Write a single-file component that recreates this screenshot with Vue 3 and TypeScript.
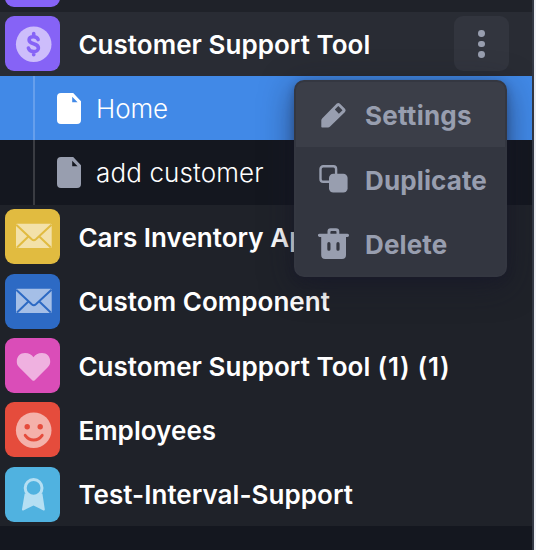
<script setup lang="ts">
type Glyph = 'mail' | 'heart' | 'smile' | 'badge'

interface AppEntry {
  name: string
  suffix?: string
  glyph: Glyph
  tone: string
  size?: string
}

const apps: AppEntry[] = [
  { name: 'Cars Inventory App', glyph: 'mail', tone: 'yellow', size: 'tall' },
  { name: 'Custom Component', glyph: 'mail', tone: 'blue', size: 'raised' },
  { name: 'Customer Support Tool', suffix: ' (1) (1)', glyph: 'heart', tone: 'pink' },
  { name: 'Employees', glyph: 'smile', tone: 'red', size: 'tall' },
  { name: 'Test-Interval-Support', glyph: 'badge', tone: 'sky', size: 'short raised' },
]

const pages = [
  { name: 'Home', selected: true },
  { name: 'add customer', selected: false },
]

const actions = ['Settings', 'Duplicate', 'Delete']
</script>

<template>
  <div class="screen">
    <aside class="sidebar">
      <div class="previous"><span class="tile purple"></span></div>

      <div class="row active">
        <span class="tile purple">
          <svg viewBox="0 0 55 55">
            <circle cx="28.7" cy="28.2" r="17.8" fill="#cdbdfb" />
            <path
              d="M33.1 23.6c-.6-2-2.3-2.9-4.5-2.9-2.7 0-4.5 1.1-4.5 3.2 0 2.4 2.2 3.1 4.5 3.8 2.4.7 4.8 1.6 4.8 4.2 0 2.3-2 3.7-4.8 3.7-2.7 0-4.7-1.2-5.2-3.6M28.7 17.6v3M28.7 36v2.8"
              fill="none" stroke="#8663f6" stroke-width="3.6" stroke-linecap="round" stroke-linejoin="round"
            />
          </svg>
        </span>
        <span class="label">Customer Support Tool</span>
        <button class="more" aria-label="More">
          <i></i><i></i><i></i>
        </button>
        <div class="menu">
          <div v-for="(action, i) in actions" :key="action" class="item" :class="{ hover: i === 0 }">
            <svg v-if="i === 0" viewBox="0 0 32 32">
              <path
                fill-rule="evenodd"
                d="M3.3 27.8V21.4q0-1.2.8-2L18.8 4.6q1.6-1.4 3.2.1l5 5q1.4 1.6 0 3.2L12.1 27.4q-.9.9-2.1 1H4.1q-.8 0-.8-.6ZM20.3 7 16.8 10.6 20.9 14.7 24.5 11.2Z"
              />
            </svg>
            <svg v-else-if="i === 1" viewBox="0 0 32 32">
              <rect x="2.5" y="3.2" width="15.6" height="15.6" rx="2.7" fill="none" stroke="currentColor" stroke-width="2.4" />
              <rect x="11" y="10.8" width="18.6" height="18.8" rx="4.3" />
            </svg>
            <svg v-else viewBox="0 0 32 32">
              <path
                transform="translate(0 .7)"
                fill-rule="evenodd"
                d="M9.5 6.1V3.6q0-3.1 3.1-3.1H18q3.3 0 3.3 3.1v2.5h8.2a1.55 1.55 0 0 1 0 3.1H28v18q0 4-4 4H7.2q-4 0-4-4v-18H1.5a1.55 1.55 0 0 1 0-3.1ZM12.4 6.1h6.1V4.3q0-1-1-1h-4.1q-1 0-1 1ZM9.3 16v5.5a1.6 1.6 0 0 0 3.2 0V16a1.6 1.6 0 0 0-3.2 0ZM18.4 16v5.5a1.6 1.6 0 0 0 3.2 0V16a1.6 1.6 0 0 0-3.2 0Z"
              />
            </svg>
            <span>{{ action }}</span>
          </div>
        </div>
      </div>

      <div class="pages">
        <div v-for="page in pages" :key="page.name" class="page" :class="{ selected: page.selected }">
          <svg viewBox="0 0 24 31">
            <path fill-rule="evenodd" d="M4 0H16.2L24 8.3V27q0 4-4 4H4q-4 0-4-4V4q0-4 4-4ZM15.2 3.7V9.2H20.6Z" />
          </svg>
          <span>{{ page.name }}</span>
        </div>
      </div>

      <div v-for="app in apps" :key="app.name" class="row" :class="app.size">
        <span class="tile" :class="app.tone">
          <svg v-if="app.glyph === 'mail'" viewBox="0 0 55 55">
            <rect class="soft" x="11" y="14.7" width="35.7" height="24.3" rx="1.2" />
            <path
              class="cut"
              d="M11.2 15.8 26.7 30.3Q28.8 32.1 30.9 30.3L46.5 15.8M12 38.5 23.4 27.5M45.8 38.5 34.3 27.5"
              fill="none" stroke-width="2"
            />
          </svg>
          <svg v-else-if="app.glyph === 'heart'" viewBox="0 0 55 55">
            <path
              class="soft"
              d="M27.2 42.2 14.4 29.5C11.9 27 11.8 25.2 11.8 23.2c0-4.7 3.4-8.2 8.2-8.2 4.2 0 6.7 2 8.5 4.2C30.3 17 32.8 15 37 15c4.8 0 8.2 3.5 8.2 8.2 0 2-.2 3.8-2.7 6.3L29.8 42.2q-1.3 1.2-2.6 0Z"
            />
          </svg>
          <svg v-else-if="app.glyph === 'smile'" viewBox="0 0 55 55">
            <circle class="soft" cx="28.7" cy="28.2" r="17.8" />
            <circle cx="22.2" cy="24.7" r="2.7" fill="#e54c3c" />
            <circle cx="35.2" cy="24.7" r="2.7" fill="#e54c3c" />
            <path
              d="M20.2 33.3C24.6 39.5 32.8 39.5 37.2 33.3"
              fill="none" stroke="#e54c3c" stroke-width="2.9" stroke-linecap="round"
            />
          </svg>
          <svg v-else viewBox="0 0 55 55">
            <path
              class="soft"
              d="M19.7 26.5 17 42.2Q16.8 43.8 18.3 43.4L28.5 38.6 38.5 43.4Q40 43.8 39.8 42.2L37.4 26.5Z"
            />
            <circle cx="28.6" cy="20.9" r="8.4" fill="#50b2e0" stroke="#b5dff3" stroke-width="3" />
          </svg>
        </span>
        <span class="label">{{ app.name }}<span v-if="app.suffix" class="suffix">{{ app.suffix }}</span></span>
      </div>
    </aside>
  </div>
</template>

<style>
body {
  margin: 0;
  overflow: hidden;
}
</style>

<style scoped>
.screen {
  width: 536px;
  height: 550px;
  overflow: hidden;
  background: #eff1f6;
  font-family: Inter, sans-serif;
}
.sidebar {
  box-sizing: border-box;
  width: 534px;
  height: 550px;
  border-right: 2px solid #333843;
  background: #14171f;
}
.previous {
  box-sizing: border-box;
  height: 12px;
  padding-left: 5px;
  display: flex;
  align-items: flex-end;
  padding-bottom: 5px;
  overflow: hidden;
  background: #1f2229;
}
.row {
  box-sizing: border-box;
  height: 64px;
  padding: 4px 23px 0 5px;
  display: flex;
  align-items: flex-start;
  background: #1f2229;
}
.row.tall {
  height: 65px;
}
.row.short {
  height: 63px;
}
.row.active {
  position: relative;
  background: #292c34;
}
.tile {
  flex: none;
  width: 55px;
  height: 55px;
  border-radius: 9px;
}
.tile svg {
  display: block;
  width: 55px;
  height: 55px;
}
.purple { background: #8663f6; }
.yellow { background: #e1bb40; }
.blue { background: #2d6ac4; }
.pink { background: #da4db8; }
.red { background: #e54c3c; }
.sky { background: #50b2e0; }
.yellow .soft { fill: #f3e1a9; }
.yellow .cut { stroke: #e1bb40; }
.blue .soft { fill: #a5bfe7; }
.blue .cut { stroke: #2d6ac4; }
.pink .soft { fill: #efb1e0; }
.red .soft { fill: #f4b1aa; }
.sky .soft { fill: #b5dff3; }
.label {
  flex: 1;
  margin-left: 18.4px;
  line-height: 57px;
  font-size: 26px;
  font-weight: 600;
  letter-spacing: 0.04px;
  white-space: nowrap;
  color: #fff;
}
.suffix {
  letter-spacing: 0.7px;
  white-space: pre;
}
.raised .label {
  line-height: 55px;
}
.more {
  box-sizing: border-box;
  width: 55px;
  height: 55px;
  padding: 1px 0 0;
  border: 0;
  border-radius: 9px;
  display: flex;
  flex-direction: column;
  align-items: center;
  justify-content: center;
  gap: 4px;
  background: #32353e;
}
.more i {
  width: 6.8px;
  height: 6.8px;
  border-radius: 50%;
  background: #989eaf;
}
.page {
  position: relative;
  box-sizing: border-box;
  height: 65px;
  padding-left: 57px;
  display: flex;
  align-items: center;
  color: #989eaf;
}
.page.selected {
  height: 64px;
  background: #4189e7;
  color: #fff;
}
.page::before {
  content: '';
  position: absolute;
  left: 33px;
  top: 0;
  bottom: 0;
  width: 2px;
  background: #3a3c42;
}
.page.selected::before {
  background: #669fec;
}
.page svg {
  width: 24px;
  height: 31px;
  fill: currentColor;
}
.page span {
  margin-left: 15px;
  font-size: 26px;
  line-height: 32px;
  font-weight: 300;
  letter-spacing: 0.13px;
  white-space: nowrap;
  color: #fff;
}
.page.selected span {
  padding-top: 2px;
  letter-spacing: -0.1px;
}
.menu {
  position: absolute;
  z-index: 2;
  left: 294px;
  top: 68px;
  box-sizing: border-box;
  width: 213px;
  height: 197px;
  border: 2px solid #343741;
  border-radius: 10px;
  overflow: hidden;
  background: #333640;
  box-shadow: 0 8px 32px rgba(22, 22, 42, 0.55), 0 3px 8px rgba(22, 22, 42, 0.3);
}
.item {
  height: 64px;
  padding-left: 22px;
  display: flex;
  align-items: center;
  color: #989eaf;
}
.item.hover {
  height: 65px;
  background: #3b3e48;
}
.item svg {
  width: 32px;
  height: 32px;
  fill: currentColor;
}
.item span {
  margin-left: 15px;
  padding-top: 4px;
  font-size: 26px;
  line-height: 32px;
  font-weight: 700;
  letter-spacing: 0.12px;
}
.item.hover span {
  padding-top: 2px;
  letter-spacing: 0.25px;
}
</style>
